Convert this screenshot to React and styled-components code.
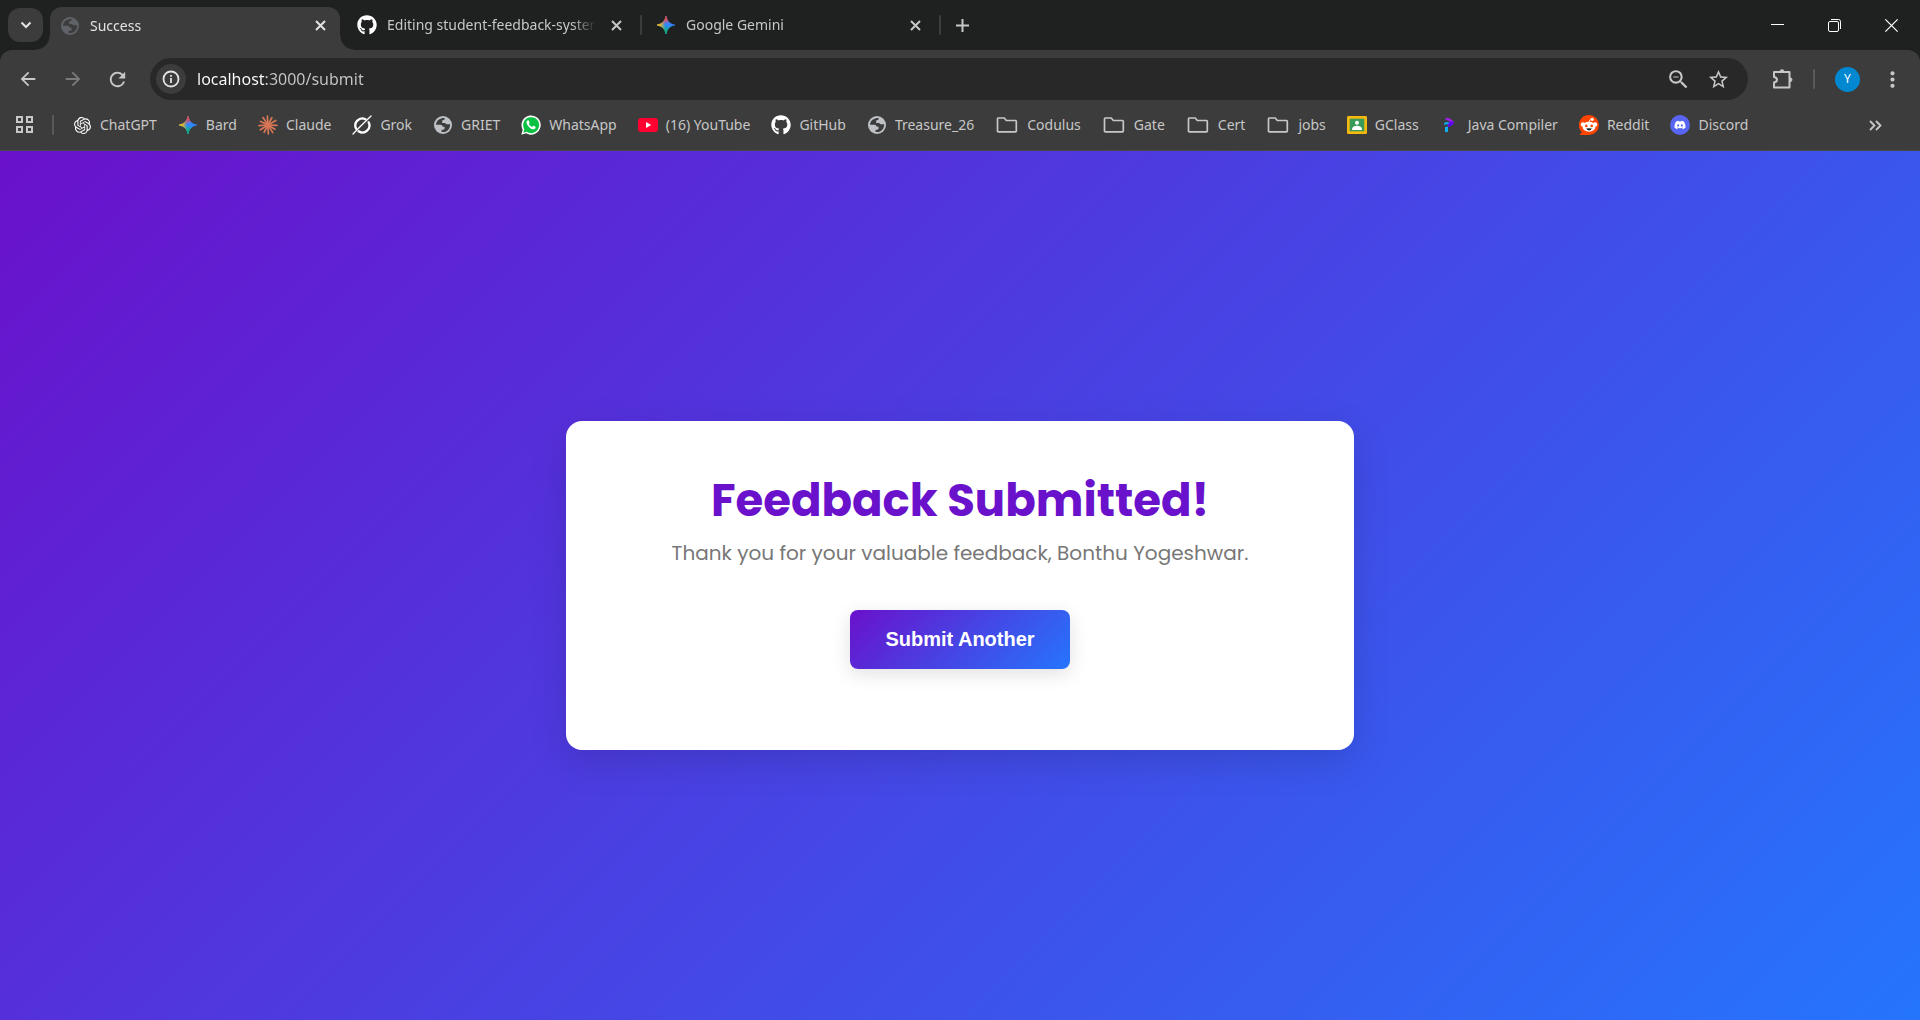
import React from 'react';
import styled, { createGlobalStyle } from 'styled-components';
import { FaGithub, FaDiscord } from 'react-icons/fa';
import { SiOpenai } from 'react-icons/si';
import { MdArrowBack, MdArrowForward, MdRefresh, MdStarBorder, MdZoomOut, MdMoreVert } from 'react-icons/md';

const color = {
  strip: '#1f2120',
  bar: '#3c3c3c',
  field: '#282828',
  text: '#c7c7c7',
  bright: '#e3e3e3',
  line: '#5a5a5a',
};

const GlobalStyle = createGlobalStyle`
  *, *::before, *::after { box-sizing: border-box; }
  body { margin: 0; background: ${color.strip}; }
  button { border: 0; padding: 0; background: none; color: inherit; font: inherit; cursor: pointer; }
  svg { display: block; flex: none; }
`;

const Shell = styled.div`
  display: flex;
  flex-direction: column;
  min-height: 100vh;
  font-family: 'Noto Sans', 'Open Sans', sans-serif;
  font-size: 14px;
  line-height: 20px;
  color: ${color.text};
`;

const TabStrip = styled.header`
  display: flex;
  align-items: stretch;
  height: 50px;
  padding-left: 8px;
  background: ${color.strip};
`;

const TabSearch = styled.button`
  display: grid;
  place-items: center;
  width: 35px;
  height: 34px;
  margin: 8px 7px 8px 0;
  border-radius: 12px;
  background: ${color.bar};
  color: ${color.bright};
`;

const Tab = styled.div`
  position: relative;
  display: flex;
  align-items: center;
  gap: 10px;
  flex: 0 1 ${(p) => (p.$active ? '290px' : '297px')};
  min-width: 0;
  margin-top: ${(p) => (p.$active ? '7px' : '0')};
  margin-right: ${(p) => (p.$active ? '3px' : '0')};
  padding: ${(p) => (p.$active ? '0 10px 6px 10px' : '0 14px')};
  border-radius: 12px 12px 0 0;
  background: ${(p) => (p.$active ? color.bar : 'transparent')};
  color: ${(p) => (p.$active ? color.bright : color.text)};

  &::before,
  &::after {
    content: '';
    display: ${(p) => (p.$active ? 'block' : 'none')};
    position: absolute;
    bottom: 0;
    width: 14px;
    height: 14px;
  }
  &::before {
    right: 100%;
    background: radial-gradient(circle at 0 0, transparent 13px, ${color.bar} 14px);
  }
  &::after {
    left: 100%;
    background: radial-gradient(circle at 100% 0, transparent 13px, ${color.bar} 14px);
  }
`;

const TabTitle = styled.span`
  flex: 1;
  min-width: 0;
  overflow: hidden;
  white-space: nowrap;
  mask-image: linear-gradient(to right, #000 calc(100% - 24px), transparent);
`;

const TabClose = styled.button`
  display: grid;
  place-items: center;
  width: 20px;
  height: 20px;
`;

const Divider = styled.span`
  flex: none;
  align-self: center;
  width: 2px;
  height: 20px;
  border-radius: 1px;
  background: ${(p) => (p.$dim ? color.bar : color.line)};
`;

const NewTab = styled.button`
  display: grid;
  place-items: center;
  width: 42px;
`;

const WindowControls = styled.div`
  display: flex;
  margin-left: auto;
  color: #fff;
`;

const WindowButton = styled.button`
  display: grid;
  place-items: center;
  width: 57px;
`;

const Toolbar = styled.div`
  display: flex;
  align-items: center;
  height: 50px;
  padding: 8px 5px 0 5px;
  border-radius: 12px 12px 0 0;
  background: ${color.bar};
`;

const ToolButton = styled.button`
  display: grid;
  place-items: center;
  width: 45px;
  height: 40px;
  opacity: ${(p) => (p.disabled ? 0.45 : 1)};
`;

const AddressBar = styled.form`
  display: flex;
  align-items: center;
  flex: 1;
  height: 42px;
  margin-left: 10px;
  margin-right: 12px;
  padding: 0 10px 0 6px;
  border-radius: 21px;
  background: ${color.field};
`;

const SiteInfo = styled.button`
  display: grid;
  place-items: center;
  width: 30px;
  height: 30px;
  margin-right: 11px;
  border-radius: 50%;
  background: ${color.bar};
  color: ${color.bright};
`;

const AddressInput = styled.input`
  flex: 1;
  min-width: 0;
  padding: 0;
  border: 0;
  outline: 0;
  font: 16px/26px 'Noto Sans', 'Open Sans', sans-serif;
  color: transparent;
  background: linear-gradient(to right, #fff 68px, ${color.text} 68px);
  background-clip: text;
`;

const AddressAction = styled.button`
  display: grid;
  place-items: center;
  width: 40px;
  height: 40px;
`;

const Account = styled.div`
  display: flex;
  align-items: center;
  gap: 20px;
  margin: 0 10px 0 8px;
`;

const Avatar = styled.button`
  display: grid;
  place-items: center;
  width: 25px;
  height: 25px;
  border-radius: 50%;
  background: #0288d1;
  color: #fff;
  font-size: 12px;
`;

const BookmarksBar = styled.nav`
  display: flex;
  align-items: center;
  height: 51px;
  padding: 0 38px 0 14px;
  border-bottom: 1px solid #484848;
  background: ${color.bar};
`;

const BookmarkList = styled.ul`
  display: flex;
  flex: 1;
  gap: 21px;
  min-width: 0;
  margin: 0 0 0 18px;
  padding: 0;
  overflow: hidden;
  list-style: none;
`;

const Bookmark = styled.a`
  display: flex;
  align-items: center;
  gap: 8px;
  white-space: nowrap;
  color: inherit;
  text-decoration: none;
`;

const IconBox = styled.span`
  display: grid;
  place-items: center;
  flex: none;
  width: ${(p) => (p.$wide ? '24px' : '20px')};
  height: 20px;
`;

const AppsButton = styled.button`
  margin-right: 18px;
`;

const Page = styled.main`
  display: flex;
  flex: 1;
  align-items: center;
  justify-content: center;
  padding: 24px;
  background: linear-gradient(135deg, #6a11cb, #2575fc);
  font-family: Poppins, Inter, sans-serif;
`;

const Card = styled.section`
  display: flex;
  flex-direction: column;
  align-items: center;
  width: 100%;
  max-width: 788px;
  padding: 50px 50px 81px;
  border-radius: 16px;
  background: #fff;
  box-shadow: 0 12px 38px rgba(0, 0, 0, 0.13);
  text-align: center;
`;

const Heading = styled.h1`
  margin: 0;
  font-size: 45px;
  font-weight: 700;
  line-height: 60px;
  color: #6a11cb;
`;

const Message = styled.p`
  margin: 6px 0 41px;
  font-size: 20px;
  line-height: 32px;
  color: #777;
`;

const SubmitButton = styled.button`
  padding: 18px 35px;
  border-radius: 8px;
  background: linear-gradient(135deg, #6a11cb, #2575fc);
  box-shadow: 0 5px 19px rgba(0, 0, 0, 0.12);
  color: #fff;
  font: 700 20px/23px 'Liberation Sans', Arial, sans-serif;
`;

const Cross = ({ size = 11, weight = 2 }) => (
  <svg width={size} height={size} viewBox="0 0 11 11" stroke="currentColor" strokeWidth={weight} fill="none">
    <path d="M1 1l9 9M10 1l-9 9" />
  </svg>
);

const Globe = ({ fill = '#bdc1c6' }) => (
  <svg width="18" height="18" viewBox="0 0 18 18">
    <circle cx="9" cy="9" r="9" fill={fill} />
    <path
      d="M11 2.1C9 1.800 6.500 2.500 5 3.500C3 4.800 2 6.800 2 8.800H6.300C7.700 8.800 8.600 9.600 8.700 10.800H10.600V12.600C10.600 13.400 10 13.700 9.200 13.700H7.600V15.900C10.500 16.500 13.700 15.100 15.200 12.400C16 11 16.200 9.700 16 8.300H13.200C12.300 8.300 11.500 7.700 11.400 6.900H8.200V5.300C8.200 4.500 8.800 4 9.700 4H10.200C10.200 3.200 10.600 2.600 11 2.100Z"
      fill={color.bar}
    />
  </svg>
);

const Gemini = () => {
  const star = 'M9 0C9.700 4.800 13.200 8.300 18 9C13.200 9.700 9.700 13.200 9 18C8.300 13.200 4.800 9.700 0 9C4.800 8.300 8.300 4.800 9 0Z';
  const id = React.useId();
  return (
    <svg width="18" height="18" viewBox="0 0 18 18">
      <defs>
        <linearGradient id={`${id}g`} x1="8" y1="18" x2="10" y2="9" gradientUnits="userSpaceOnUse">
          <stop offset="0.2" stopColor="#08b962" />
          <stop offset="1" stopColor="#08b962" stopOpacity="0" />
        </linearGradient>
        <linearGradient id={`${id}r`} x1="8" y1="0" x2="10" y2="9" gradientUnits="userSpaceOnUse">
          <stop offset="0.3" stopColor="#f94543" />
          <stop offset="0.9" stopColor="#f94543" stopOpacity="0" />
        </linearGradient>
        <linearGradient id={`${id}y`} x1="0" y1="9" x2="9" y2="9" gradientUnits="userSpaceOnUse">
          <stop offset="0.3" stopColor="#fabc12" />
          <stop offset="0.9" stopColor="#fabc12" stopOpacity="0" />
        </linearGradient>
      </defs>
      <path d={star} fill="#3186ff" stroke="#3186ff" strokeWidth="0.6" />
      {['g', 'r', 'y'].map((k) => (
        <path key={k} d={star} fill={`url(#${id}${k})`} stroke={`url(#${id}${k})`} strokeWidth="0.6" />
      ))}
    </svg>
  );
};

const rays = [2, 32, 58, 88, 118, 148, 176, 206, 236, 266, 298, 330];
const Claude = () => (
  <svg width="20" height="20" viewBox="-10 -10 20 20" stroke="#d97757" strokeWidth="1.700" strokeLinecap="round">
    {rays.map((a, i) => (
      <path key={a} d={`M0 0H${i % 3 === 1 ? 8.2 : 9}`} transform={`rotate(${a})`} />
    ))}
  </svg>
);

const Grok = () => (
  <svg width="20" height="20" viewBox="0 0 20 20" fill="none" stroke="#fff" strokeLinecap="round">
    <path d="M13.500 4.200A7 7 0 0 0 4.200 13.800" strokeWidth="2.300" />
    <path d="M16.600 7.200A7 7 0 0 1 6.600 16.300" strokeWidth="2.300" />
    <path d="M1 19L7.500 12.300M19 1L7.500 12.300" strokeWidth="1.300" />
  </svg>
);

const Whatsapp = () => (
  <svg width="20" height="20" viewBox="0 0 20 20">
    <path d="M.3 19.700L1.700 14.700A9.600 9.600 0 1 1 5.200 18.300Z" fill="#fff" />
    <path d="M2.300 17.700L3.300 14.300A8 8 0 1 1 5.700 16.800Z" fill="#0ac143" />
    <path
      d="M7.300 5.200C6.500 5.200 5.500 6 5.500 7.500C5.500 9.300 8.200 12.800 10.600 13.900C12.500 14.700 14.400 14.100 14.600 12.500C14.700 11.900 14.600 11.700 12.500 10.800C12.100 10.600 11.800 11.100 11.200 11.900C9.800 11.500 8.500 10.200 7.900 9C8.400 8.400 8.700 8 8.500 7.600L7.800 5.600Z"
      fill="#fff"
    />
  </svg>
);

const Youtube = () => (
  <svg width="20" height="14" viewBox="0 0 20 14">
    <rect width="20" height="14" rx="3" fill="#ff0033" />
    <path d="M8 4L13.200 7L8 10Z" fill="#fff" />
  </svg>
);

const Folder = () => (
  <svg width="22" height="18" viewBox="0 0 22 18" fill="none" stroke={color.text} strokeWidth="1.700">
    <path d="M2.300 2H8.300L10.300 4.500H19.500Q20.300 4.500 20.300 5.300V15Q20.300 15.800 19.500 15.800H2.500Q1.500 15.800 1.500 15V2.800Q1.500 2 2.300 2Z" />
  </svg>
);

const Classroom = () => (
  <svg width="20" height="18" viewBox="0 0 20 18">
    <rect width="20" height="18" rx="1.300" fill="#f4b90f" />
    <rect x="2.700" y="2.700" width="14.600" height="12.600" fill="#389b59" />
    <circle cx="10" cy="6.800" r="2" fill="#fff" />
    <path d="M5 14C5 10.500 8 9.800 10 9.800S15 10.500 15 14Z" fill="#fff" />
  </svg>
);

const JavaCompiler = () => (
  <svg width="20" height="20" viewBox="0 0 20 20">
    <path d="M5.500 2.800Q11 2.600 14 7.300L12.500 9.500Q9.500 5.600 5.500 4.600Z" fill="#a020e8" />
    <path d="M8.500 7.500L12 6.300L14 7.300Q12.500 11 8.500 12.200L7.500 10.500Z" fill="#5a08f0" />
    <path d="M4 8Q5.500 6.300 9 7.300L8.500 9.200Q6 9 4.500 10.300Z" fill="#10a8e8" />
    <path d="M5 12L8 11.500V16.500Q6.500 17.800 5 16.800Z" fill="#10b4f0" />
  </svg>
);

const Reddit = () => (
  <svg width="20" height="20" viewBox="0 0 20 20">
    <path d="M10 0A10 10 0 1 1 10 20H1.200Q.4 20 1 19.300L2.900 17.100A10 10 0 0 1 10 0Z" fill="#ff4500" />
    <circle cx="4" cy="9.400" r="2.200" fill="#fff" />
    <circle cx="16" cy="9.400" r="2.200" fill="#fff" />
    <ellipse cx="10" cy="11.800" rx="6.500" ry="5" fill="#fff" />
    <circle cx="13.200" cy="4.300" r="1.600" fill="#fff" />
    <path d="M10 7Q10 4.500 12.500 4.400" stroke="#fff" strokeWidth="0.8" fill="none" />
    <circle cx="7.300" cy="10.900" r="1.300" fill="#ff4500" />
    <circle cx="12.700" cy="10.900" r="1.300" fill="#ff4500" />
    <path d="M7.200 13.500Q10 12.800 12.800 13.500Q12 15.600 10 15.600T7.200 13.500Z" fill="#14222c" />
  </svg>
);

const Discord = () => (
  <svg width="20" height="20" viewBox="0 0 20 20">
    <circle cx="10" cy="10" r="10" fill="#5865f2" />
    <FaDiscord x="4" y="4" size={12} color="#fff" />
  </svg>
);

const Apps = () => (
  <svg width="20" height="20" viewBox="0 0 20 20" fill="none" stroke={color.text} strokeWidth="2">
    <path d="M3 2h5v5h-5zM13 2h5v5h-5zM3 12h5v5h-5zM13 12h5v5h-5z" />
  </svg>
);

const Puzzle = () => (
  <svg width="22" height="22" viewBox="0 0 22 22" fill="none" stroke="currentColor" strokeWidth="2" strokeLinejoin="round">
    <path d="M2 4H17.500V19.500H2V14.500Q5 14 5 11.800T2 9Z" />
    <path d="M7.500 3.500Q8 1.200 10 1.200T12.500 3.500ZM18 9.300Q20.500 9.800 20.500 11.800T18 14.200Z" fill="currentColor" stroke="none" />
  </svg>
);

const bookmarks = [
  { name: 'ChatGPT', icon: <SiOpenai size={17} color="#fff" /> },
  { name: 'Bard', icon: <Gemini /> },
  { name: 'Claude', icon: <Claude /> },
  { name: 'Grok', icon: <Grok /> },
  { name: 'GRIET', icon: <Globe /> },
  { name: 'WhatsApp', icon: <Whatsapp /> },
  { name: '(16) YouTube', icon: <Youtube /> },
  { name: 'GitHub', icon: <FaGithub size={20} color="#fff" /> },
  { name: 'Treasure_26', icon: <Globe /> },
  { name: 'Codulus', icon: <Folder />, wide: true },
  { name: 'Gate', icon: <Folder />, wide: true },
  { name: 'Cert', icon: <Folder />, wide: true },
  { name: 'jobs', icon: <Folder />, wide: true },
  { name: 'GClass', icon: <Classroom /> },
  { name: 'Java Compiler', icon: <JavaCompiler /> },
  { name: 'Reddit', icon: <Reddit /> },
  { name: 'Discord', icon: <Discord /> },
];

const tabs = [
  { title: 'Success', icon: <Globe fill="#5f6368" />, active: true },
  { title: 'Editing student-feedback-system', icon: <FaGithub size={20} color="#fff" /> },
  { title: 'Google Gemini', icon: <Gemini /> },
];

export default function App() {
  return (
    <Shell>
      <GlobalStyle />
      <TabStrip>
        <TabSearch aria-label="Search tabs">
          <svg width="12" height="8" viewBox="0 0 12 8" fill="none" stroke="currentColor" strokeWidth="2">
            <path d="M1.500 1.500L6 6L10.500 1.500" />
          </svg>
        </TabSearch>
        {tabs.map((t) => (
          <React.Fragment key={t.title}>
            <Tab $active={t.active}>
              <IconBox>{t.icon}</IconBox>
              <TabTitle>{t.title}</TabTitle>
              <TabClose aria-label={`Close ${t.title}`}>
                <Cross />
              </TabClose>
            </Tab>
            {!t.active && <Divider $dim />}
          </React.Fragment>
        ))}
        <NewTab aria-label="New tab">
          <svg width="13" height="13" viewBox="0 0 13 13" stroke="currentColor" strokeWidth="2">
            <path d="M6.500 0V13M0 6.500H13" />
          </svg>
        </NewTab>
        <WindowControls>
          <WindowButton aria-label="Minimize">
            <svg width="13" height="3" viewBox="0 0 13 3">
              <path d="M0 0H13V1H0Z" fill="currentColor" />
            </svg>
          </WindowButton>
          <WindowButton aria-label="Restore">
            <svg width="13" height="13" viewBox="0 0 13 13" fill="none" stroke="currentColor">
              <rect x="0.5" y="2.500" width="10" height="10" rx="1.500" />
              <path d="M3 .5H10.500Q12.500 .5 12.500 2.500V10" />
            </svg>
          </WindowButton>
          <WindowButton aria-label="Close window">
            <Cross size={15} weight={0.9} />
          </WindowButton>
        </WindowControls>
      </TabStrip>

      <Toolbar>
        <ToolButton aria-label="Back">
          <MdArrowBack size={22} />
        </ToolButton>
        <ToolButton aria-label="Forward" disabled>
          <MdArrowForward size={22} />
        </ToolButton>
        <ToolButton aria-label="Reload">
          <MdRefresh size={23} />
        </ToolButton>
        <AddressBar onSubmit={(e) => e.preventDefault()}>
          <SiteInfo type="button" aria-label="View site information">
            <svg width="18" height="18" viewBox="0 0 18 18" fill="none" stroke="currentColor" strokeWidth="1.800">
              <circle cx="9" cy="9" r="7.500" />
              <path d="M9 8V13M9 5V6.800" />
            </svg>
          </SiteInfo>
          <AddressInput aria-label="Address" defaultValue="localhost:3000/submit" spellCheck={false} />
          <AddressAction type="button" aria-label="Zoom out">
            <MdZoomOut size={25} />
          </AddressAction>
          <AddressAction type="button" aria-label="Bookmark this tab">
            <MdStarBorder size={23} />
          </AddressAction>
        </AddressBar>
        <ToolButton aria-label="Extensions">
          <Puzzle />
        </ToolButton>
        <Account>
          <Divider />
          <Avatar aria-label="Profile">Y</Avatar>
        </Account>
        <ToolButton aria-label="Menu">
          <MdMoreVert size={25} />
        </ToolButton>
      </Toolbar>

      <BookmarksBar aria-label="Bookmarks">
        <AppsButton aria-label="Apps">
          <Apps />
        </AppsButton>
        <Divider />
        <BookmarkList>
          {bookmarks.map((b) => (
            <li key={b.name}>
              <Bookmark href="#">
                <IconBox $wide={b.wide}>{b.icon}</IconBox>
                {b.name}
              </Bookmark>
            </li>
          ))}
        </BookmarkList>
        <button aria-label="More bookmarks">
          <svg width="13" height="11" viewBox="0 0 13 11" fill="none" stroke="currentColor" strokeWidth="1.800">
            <path d="M1 1L5.500 5.500L1 10M7 1L11.500 5.500L7 10" />
          </svg>
        </button>
      </BookmarksBar>

      <Page>
        <Card>
          <Heading>Feedback Submitted!</Heading>
          <Message>Thank you for your valuable feedback, Bonthu Yogeshwar.</Message>
          <SubmitButton type="button">Submit Another</SubmitButton>
        </Card>
      </Page>
    </Shell>
  );
}
